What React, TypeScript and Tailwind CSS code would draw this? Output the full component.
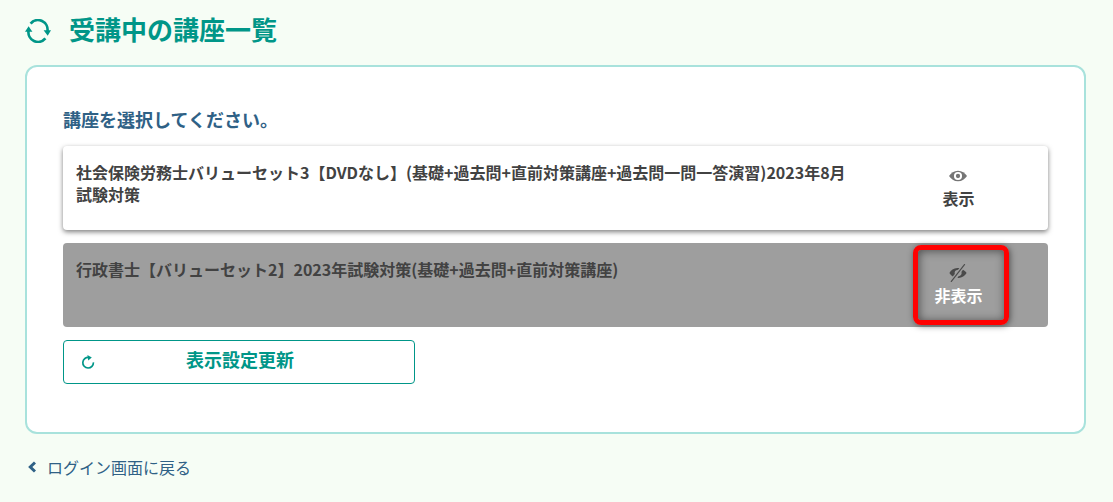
type Course = {
  id: string;
  title: string;
  visible: boolean;
  highlighted?: boolean;
};

const courses: Course[] = [
  {
    id: "sharoushi",
    title:
      "社会保険労務士バリューセット3【DVDなし】(基礎+過去問+直前対策講座+過去問一問一答演習)2023年8月試験対策",
    visible: true,
  },
  {
    id: "gyosei",
    title: "行政書士【バリューセット2】2023年試験対策(基礎+過去問+直前対策講座)",
    visible: false,
    highlighted: true,
  },
];

function CycleIcon() {
  return (
    <svg viewBox="0 0 26 24" className="mt-1 h-6 w-[26px]" aria-hidden="true">
      <g fill="none" stroke="currentColor" strokeWidth="2.7">
        <path d="M5.6 4.600A9.600 9.600 0 0 1 22.400 12.500" />
        <path d="M20.400 19.400A9.600 9.600 0 0 1 3.600 11.500" />
      </g>
      <path d="M18.600 11.300H26l-3.300 5.400zM0 12.700h7.400L3.600 7.300z" fill="currentColor" />
    </svg>
  );
}

function EyeIcon() {
  return (
    <svg viewBox="0 0 18 18" className="size-[18px] text-[#757575]" aria-hidden="true">
      <path d="M0 9C2 6 5 3.700 9 3.700S16 6 18 9c-2 3-5 5.300-9 5.300S2 12 0 9z" fill="currentColor" />
      <circle cx="9" cy="9" r="3.100" fill="none" stroke="#fff" strokeWidth="1.900" />
    </svg>
  );
}

function EyeOffIcon() {
  return (
    <svg viewBox="0 0 18 18" className="size-[18px] text-[#4a4a4a]" aria-hidden="true">
      <path
        d="M10.400 4.200C5.500 3.200 2.200 5.800.4 9c.9 1.500 2 2.600 3.400 3.500l2-2.400C5.200 7.800 6.300 5.900 9 5.800zM14 5.700c1.500.8 2.800 1.900 3.600 3.300-2 3.300-5.300 5.400-9.200 4.900l1.100-1.600c2.400-.3 3.600-2.300 3-4.600z"
        fill="currentColor"
      />
      <path d="M15.800.2 2 17.800" stroke="currentColor" strokeWidth="1.200" />
    </svg>
  );
}

function ReloadIcon() {
  return (
    <svg viewBox="0 0 14 14" className="size-[14px]" aria-hidden="true">
      <path d="M8 2.500A5.300 5.300 0 1 0 12.400 7.400" fill="none" stroke="currentColor" strokeWidth="1.700" />
      <path d="M6.400 0 10.800 2.600 7.200 5.600z" fill="currentColor" />
    </svg>
  );
}

function CourseRow({ course }: { course: Course }) {
  return (
    <li
      className={
        course.visible
          ? "flex min-h-[84px] rounded bg-white shadow-[0_2px_5px_rgba(0,0,0,0.5)]"
          : "flex min-h-[84px] rounded bg-[#9e9e9e]"
      }
    >
      <p className="min-w-0 flex-1 py-[15px] pl-[13px] pr-2 text-base leading-[22px] font-bold text-[#424242]">
        {course.title}
      </p>
      <div className="relative flex w-[179px] shrink-0 justify-center">
        <button
          type="button"
          aria-pressed={course.visible}
          className={
            course.visible
              ? "flex cursor-pointer flex-col items-center pt-[21px] text-base leading-6 font-bold text-[#424242]"
              : "flex cursor-pointer flex-col items-center pt-[21px] text-base leading-6 font-bold text-white"
          }
        >
          {course.visible ? <EyeIcon /> : <EyeOffIcon />}
          <span className="mt-px">{course.visible ? "表示" : "非表示"}</span>
        </button>
        {course.highlighted && (
          <span className="pointer-events-none absolute top-0.5 left-11 h-20 w-24 rounded-lg border-[5px] border-[#ff0000] shadow-[1px_1px_6px_rgba(0,0,0,0.5),inset_1px_1px_10px_rgba(0,0,0,0.5)]" />
        )}
      </div>
    </li>
  );
}

export default function App() {
  return (
    <div className="min-h-screen bg-[#f6fdf5] px-[25px] pt-[11px] pb-6 font-['Noto_Sans_CJK_JP',sans-serif]">
      <header className="flex items-center gap-[18px] text-[#009688]">
        <CycleIcon />
        <h1 className="text-[26px] leading-9 font-bold">受講中の講座一覧</h1>
      </header>

      <main className="mt-[18px] mr-0.5 rounded-xl border-2 border-[#a8e2dc] bg-white px-9 pt-[38px] pb-12">
        <h2 className="text-lg leading-7 font-bold text-[#2f6186]">講座を選択してください。</h2>
        <ul className="mt-[13px] flex flex-col gap-[13px]">
          {courses.map((course) => (
            <CourseRow key={course.id} course={course} />
          ))}
        </ul>
        <button
          type="button"
          className="mt-[13px] flex h-11 w-full max-w-[352px] cursor-pointer items-center rounded border border-[#009688] px-[17px] text-[#009688]"
        >
          <ReloadIcon />
          <span className="flex-1 pr-3 pb-[7px] text-center text-lg leading-7 font-bold">表示設定更新</span>
        </button>
      </main>

      <a href="#login" className="mt-[21px] inline-flex items-center gap-[11px] pl-[3px] text-base leading-6 text-[#2f6186]">
        <svg viewBox="0 0 8 12" className="h-3 w-2" aria-hidden="true">
          <path d="M7 1.500 2.300 6 7 10.500" fill="none" stroke="currentColor" strokeWidth="3" />
        </svg>
        ログイン画面に戻る
      </a>
    </div>
  );
}
